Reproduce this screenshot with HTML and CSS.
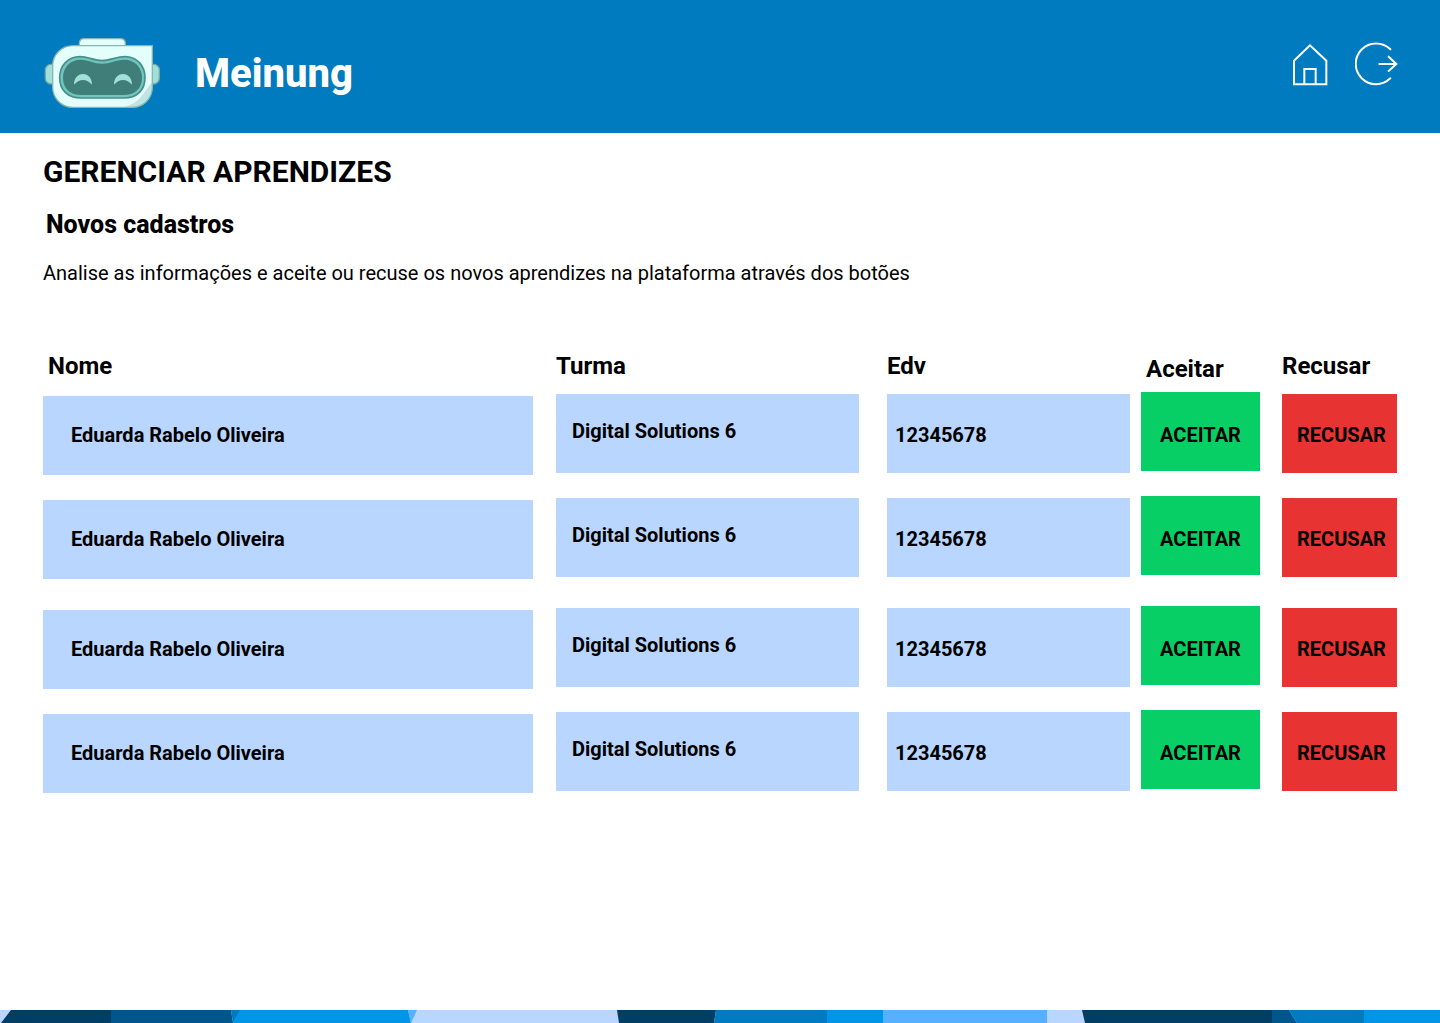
FILE: index.html
```html
<!DOCTYPE html>
<html lang="pt-BR">
<head>
  <meta charset="utf-8">
  <meta name="viewport" content="width=device-width, initial-scale=1">
  <title>Meinung</title>
  <link rel="stylesheet" href="styles.css">
</head>
<body>
  <header class="topbar">
    <svg class="logo" viewBox="24 21 351 216" aria-hidden="true">
      <rect x="28" y="103" width="50" height="59" rx="17" fill="#a3dfda" stroke="#73a9a5" stroke-width="4"/>
      <rect x="320" y="103" width="50" height="59" rx="17" fill="#a3dfda" stroke="#73a9a5" stroke-width="4"/>
      <path d="M130 48V40Q130 26 145 26H252Q268 26 268 40V48Z" fill="#e4fffb" stroke="#8cb5b2" stroke-width="4"/>
      <path d="M110 47H349V172A60 60 0 0 1 289 232H110A60 60 0 0 1 50 172V107A60 60 0 0 1 110 47Z" fill="#e4fffb"/>
      <path d="M349 155V172A60 60 0 0 1 289 232H262Q300 223 322 192Q334 174 349 155Z" fill="#bfe5e2"/>
      <path d="M110 47H349V172A60 60 0 0 1 289 232H110A60 60 0 0 1 50 172V107A60 60 0 0 1 110 47Z" fill="none" stroke="#8cb5b2" stroke-width="4"/>
      <path d="M132 80C156 80 174 92 198 92S242 80 266 80C305 80 327 109 327 143C327 181 302 204 264 204H136C96 204 71 181 71 143C71 109 94 80 132 80Z" fill="#72c5bf" stroke="#478f89" stroke-width="5"/>
      <path d="M134 89C157 89 174 101 198 101S241 89 264 89C298 89 318 113 318 143C318 176 296 195 262 195H138C102 195 81 176 81 143C81 113 101 89 134 89Z" fill="#3f7e79"/>
      <path d="M114 164C114 145 125 132 141 132S168 145 168 164C160 155 151 150 141 150S122 155 114 164Z" fill="#a3dfda"/>
      <path d="M234 164C234 145 245 132 261 132S288 145 288 164C280 155 271 150 261 150S242 155 234 164Z" fill="#a3dfda"/>
    </svg>
    <span class="brand">Meinung</span>
    <nav class="actions">
      <a href="#" aria-label="Início">
        <svg class="icon-home" viewBox="36 27 108 129"><path d="M42 151V80L90 34L139 80V151ZM73 151V105H107V151"/></svg>
      </a>
      <a href="#" aria-label="Sair">
        <svg class="icon-exit" viewBox="225 24 129 132"><path d="M331 46A61 61 0 1 0 331 133M298 90H349M326 68L349 90L326 111"/></svg>
      </a>
    </nav>
  </header>

  <main class="content">
    <h1>GERENCIAR APRENDIZES</h1>
    <h2>Novos cadastros</h2>
    <p>Analise as informações e aceite ou recuse os novos aprendizes na plataforma através dos botões</p>

    <table class="requests">
      <thead>
        <tr>
          <th class="name" scope="col">Nome</th>
          <th scope="col">Turma</th>
          <th scope="col">Edv</th>
          <th class="accept" scope="col">Aceitar</th>
          <th scope="col">Recusar</th>
        </tr>
      </thead>
      <tbody>
        <tr>
          <td class="name"><div class="field">Eduarda Rabelo Oliveira</div></td>
          <td class="group"><div class="field">Digital Solutions 6</div></td>
          <td class="edv"><div class="field">12345678</div></td>
          <td class="accept"><button type="button">ACEITAR</button></td>
          <td class="refuse"><button type="button">RECUSAR</button></td>
        </tr>
        <tr>
          <td class="name"><div class="field">Eduarda Rabelo Oliveira</div></td>
          <td class="group"><div class="field">Digital Solutions 6</div></td>
          <td class="edv"><div class="field">12345678</div></td>
          <td class="accept"><button type="button">ACEITAR</button></td>
          <td class="refuse"><button type="button">RECUSAR</button></td>
        </tr>
      </tbody>
      <tbody>
        <tr>
          <td class="name"><div class="field">Eduarda Rabelo Oliveira</div></td>
          <td class="group"><div class="field">Digital Solutions 6</div></td>
          <td class="edv"><div class="field">12345678</div></td>
          <td class="accept"><button type="button">ACEITAR</button></td>
          <td class="refuse"><button type="button">RECUSAR</button></td>
        </tr>
        <tr>
          <td class="name"><div class="field">Eduarda Rabelo Oliveira</div></td>
          <td class="group"><div class="field">Digital Solutions 6</div></td>
          <td class="edv"><div class="field">12345678</div></td>
          <td class="accept"><button type="button">ACEITAR</button></td>
          <td class="refuse"><button type="button">RECUSAR</button></td>
        </tr>
      </tbody>
    </table>
  </main>

  <footer>
    <svg class="ribbon" viewBox="0 0 1440 13" preserveAspectRatio="none" aria-hidden="true">
      <rect width="1440" height="13" fill="#b8d6ff"/>
      <path d="M11 0H111V13H1Z" fill="#003e64"/>
      <path d="M111 0H231L233 13H111Z" fill="#00568a"/>
      <path d="M231 0H241L233 13Z" fill="#007bc0"/>
      <path d="M240 0H408L411 13H233Z" fill="#0096e8"/>
      <path d="M408 0H417L411 13Z" fill="#56b0ff"/>
      <path d="M617 0H716L714 13H619Z" fill="#003e64"/>
      <path d="M716 0H827V13H714Z" fill="#007bc0"/>
      <path d="M827 0H883V13H827Z" fill="#0096e8"/>
      <path d="M883 0H1047V13H883Z" fill="#56b0ff"/>
      <path d="M1082 0H1273L1272 13H1085Z" fill="#003e64"/>
      <path d="M1272 0H1289L1297 13H1272Z" fill="#00568a"/>
      <path d="M1289 0H1365L1364 13H1297Z" fill="#007bc0"/>
      <path d="M1364 0H1440V13H1364Z" fill="#0096e8"/>
    </svg>
  </footer>
</body>
</html>
```
FILE: styles.css
```css
* {
  box-sizing: border-box;
}

body {
  display: flex;
  flex-direction: column;
  min-height: 100vh;
  margin: 0;
  background: #fff;
  color: #000;
  font-family: Roboto, sans-serif;
}

.topbar {
  display: flex;
  align-items: flex-start;
  padding: 37px 42px 22px 44px;
  background: #007bc0;
}

.logo {
  width: 117px;
  height: 72px;
}

.brand {
  margin-left: 34px;
  color: #fff;
  font-size: 40px;
  font-weight: 800;
  line-height: 74px;
}

.actions {
  display: flex;
  align-items: center;
  gap: 27px;
  margin-left: auto;
  padding-top: 5px;
}

.actions a {
  display: flex;
}

.actions svg {
  fill: none;
  stroke: #fff;
  stroke-width: 6;
  stroke-linecap: round;
}

.icon-home {
  width: 36px;
  height: 43px;
}

.icon-exit {
  width: 43px;
  height: 44px;
}

.content {
  flex: 1;
  padding: 20px 43px;
}

h1,
h2,
p {
  margin: 0;
}

h1 {
  font-size: 30px;
  font-weight: 700;
  line-height: 38px;
}

h2 {
  padding: 18px 3px 20px;
  font-size: 25px;
  font-weight: 800;
  line-height: 32px;
}

p {
  font-size: 20px;
  line-height: 24px;
}

.requests {
  display: block;
  margin-top: 65px;
}

.requests thead,
.requests tbody {
  display: block;
}

.requests tbody + tbody {
  margin-top: 6px;
}

.requests tr {
  display: grid;
  grid-template-columns: 513fr 331fr 254fr 141fr 115fr;
}

.requests th {
  padding: 0 0 7px;
  font-size: 24px;
  font-weight: 700;
  line-height: 32px;
  text-align: left;
}

.requests th.name,
.requests th.accept {
  padding-left: 5px;
}

.requests th.accept {
  padding-top: 3px;
}

.requests td {
  padding: 2px 0 21px;
  font-size: 20px;
  font-weight: 700;
}

.requests td.name {
  padding: 4px 23px 21px 0;
}

.requests td.group {
  padding-right: 28px;
}

.requests td.edv {
  padding-right: 11px;
}

.requests td.accept {
  padding-top: 0;
  padding-right: 22px;
}

.field,
.requests button {
  display: flex;
  align-items: center;
  width: 100%;
  height: 79px;
}

.field {
  background: #b8d6ff;
}

.name .field {
  padding: 0 28px 2px;
}

.group .field {
  padding: 0 16px 6px;
}

.edv .field {
  padding: 2px 8px 0;
}

.requests button {
  border: 0;
  color: inherit;
  font: inherit;
  cursor: pointer;
}

.accept button {
  justify-content: center;
  padding: 6px 0 0;
  background: #08cf65;
}

.refuse button {
  padding: 2px 0 0 15px;
  background: #e83333;
}

.ribbon {
  display: block;
  width: 100%;
  height: 13px;
}
```
